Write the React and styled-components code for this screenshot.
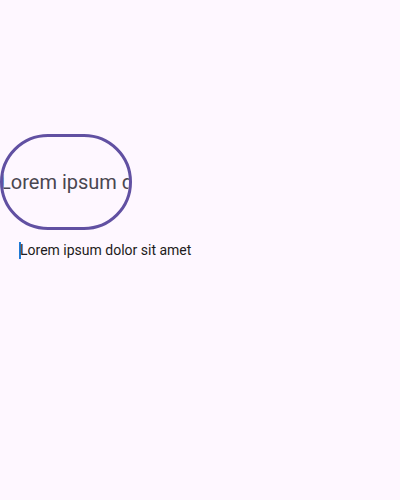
import React from 'react'
import styled, { createGlobalStyle } from 'styled-components';

const Global = createGlobalStyle`
  html, body {
    margin: 0;
    padding: 0;
    background: #fef7ff;
    font-family: Roboto, "Noto Sans", sans-serif;
  }
`;

const Page = styled.div`
  width: 400px;
  height: 500px;
  display: flex;
  flex-direction: column;
  align-items: flex-start;
  padding-top: 134px;
  box-sizing: border-box;
`;

// chip-like pill whose label is clipped by its rounded edge
const Pill = styled.div`
  width: 132px;
  height: 96px;
  box-sizing: border-box;
  border: 3px solid #6150a2;
  border-radius: 48px;
  overflow: hidden;
  display: flex;
  align-items: center;
`;

const PillText = styled.span`
  font-size: 20px;
  color: #4a4650;
  white-space: nowrap;
  margin-left: -3px;
`;

const Field = styled.div`
  margin-top: 11px;
  margin-left: 19px;
  display: flex;
  align-items: center;
  height: 18px;
`;

const Caret = styled.span`
  width: 2px;
  height: 17px;
  background: #1f7ad6;
  margin-right: -1px;
`;

const FieldText = styled.span`
  font-size: 14px;
  color: #1d1b20;
  white-space: nowrap;
`;

export default function App() {
  return (
    <>
      <Global />
      <Page>
        <Pill>
          <PillText>Lorem ipsum dolor sit amet</PillText>
        </Pill>
        <Field>
          <Caret />
          <FieldText>Lorem ipsum dolor sit amet</FieldText>
        </Field>
      </Page>
    </>
  );
}
